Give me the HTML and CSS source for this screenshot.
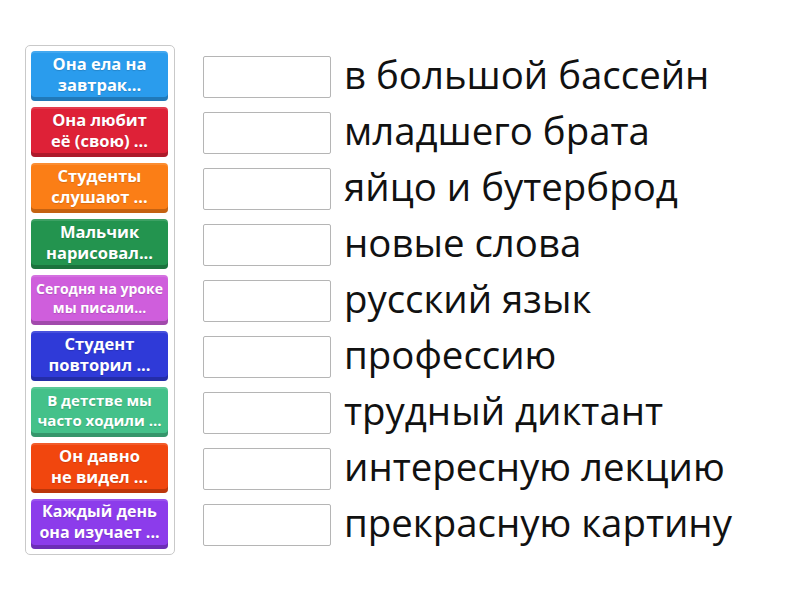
FILE: index.html
```html
<!DOCTYPE html>
<html lang="ru">
<head>
<meta charset="utf-8">
<link rel="stylesheet" href="styles.css">
</head>
<body>
<div class="page">
  <div class="bank">
    <div class="tile c1">Она ела на<br>завтрак...</div>
    <div class="tile c2">Она любит<br>её (свою) ...</div>
    <div class="tile c3">Студенты<br>слушают ...</div>
    <div class="tile c4">Мальчик<br>нарисовал...</div>
    <div class="tile c5 small">Сегодня на уроке<br>мы писали...</div>
    <div class="tile c6">Студент<br>повторил ...</div>
    <div class="tile c7 mid">В детстве мы<br>часто ходили ...</div>
    <div class="tile c8">Он давно<br>не видел ...</div>
    <div class="tile c9 mid2">Каждый день<br>она изучает ...</div>
  </div>
  <div class="rows">
    <div class="row"><div class="slot"></div><div class="label">в большой бассейн</div></div>
    <div class="row"><div class="slot"></div><div class="label">младшего брата</div></div>
    <div class="row"><div class="slot"></div><div class="label">яйцо и бутерброд</div></div>
    <div class="row"><div class="slot"></div><div class="label">новые слова</div></div>
    <div class="row"><div class="slot"></div><div class="label">русский язык</div></div>
    <div class="row"><div class="slot"></div><div class="label">профессию</div></div>
    <div class="row"><div class="slot"></div><div class="label">трудный диктант</div></div>
    <div class="row"><div class="slot"></div><div class="label">интересную лекцию</div></div>
    <div class="row"><div class="slot"></div><div class="label">прекрасную картину</div></div>
  </div>
</div>
</body>
</html>
```
FILE: styles.css
```css
html, body {
  margin: 0;
  padding: 0;
  background: #ffffff;
  font-family: "Open Sans", "Noto Sans", sans-serif;
}
.page {
  display: flex;
  align-items: flex-start;
  padding: 45px 0 0 25px;
  width: 800px;
  height: 600px;
  box-sizing: border-box;
}
.bank {
  width: 150px;
  box-sizing: border-box;
  border: 1px solid #c9c9c9;
  border-radius: 5px;
  padding: 5px 6px 5px 5px;
  display: flex;
  flex-direction: column;
  gap: 6px;
}
.tile {
  height: 50px;
  box-sizing: border-box;
  border-radius: 4px;
  color: #fff;
  font-weight: 700;
  font-size: 16.5px;
  line-height: 21px;
  text-align: center;
  white-space: nowrap;
  display: flex;
  align-items: center;
  justify-content: center;
  padding: 0 2px 4px;
  box-shadow: inset 0 -4px 0 rgba(0,0,0,0.22), inset 0 2px 0 rgba(255,255,255,0.12);
  text-shadow: 0 1px 1px rgba(0,0,0,0.15);
}
.tile.small { font-size: 14px; line-height: 19px; }
.tile.mid { font-size: 15px; line-height: 20px; }
.tile.mid2 { font-size: 16px; line-height: 21px; }
.c1 { background: #2a9ced; }
.c2 { background: #de2137; }
.c3 { background: #fb7e16; }
.c4 { background: #23944f; }
.c5 { background: #cf5edc; }
.c6 { background: #2f3ad8; }
.c7 { background: #44c18a; }
.c8 { background: #f1460e; }
.c9 { background: #8c3ceb; }
.rows {
  margin-left: 28px;
  padding-top: 11px;
  display: flex;
  flex-direction: column;
  gap: 14px;
}
.row {
  display: flex;
  align-items: center;
  height: 42px;
  gap: 13px;
}
.slot {
  width: 128px;
  height: 42px;
  box-sizing: border-box;
  border: 1px solid #b5b5b5;
  border-radius: 2px;
  background: #fff;
  flex: none;
}
.label {
  font-size: 38.4px;
  color: #111;
  white-space: nowrap;
  line-height: 42px;
  margin-top: -6px;
}
```
